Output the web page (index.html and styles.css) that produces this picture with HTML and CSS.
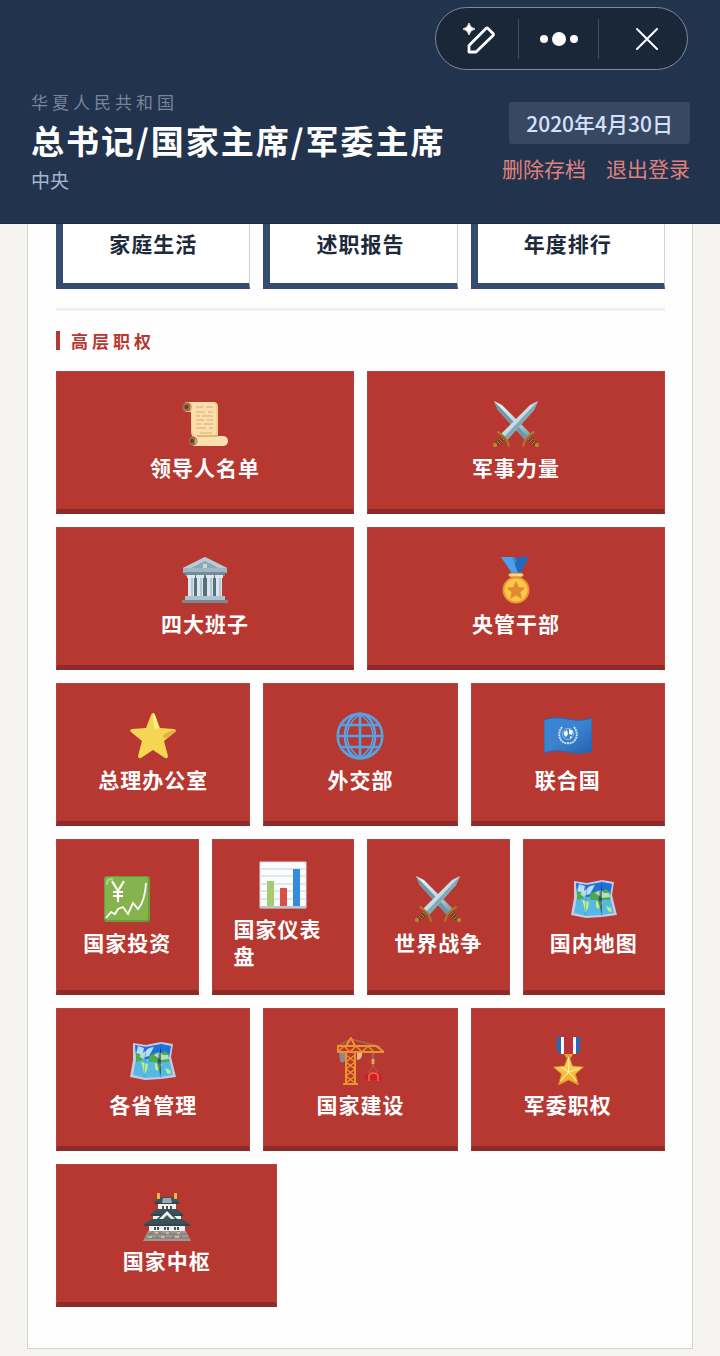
FILE: index.html
```html
<!DOCTYPE html>
<html lang="zh-CN">
<head>
<meta charset="utf-8">
<meta name="viewport" content="width=device-width, initial-scale=1">
<title>华夏人民共和国</title>
<link rel="stylesheet" href="styles.css">
</head>
<body>
<svg class="sprite" aria-hidden="true">
  <defs>
    <linearGradient id="blade" x1="0" y1="0" x2="1" y2="1"><stop offset="0" stop-color="#eef8fb"/><stop offset=".5" stop-color="#c3dbe5"/><stop offset="1" stop-color="#7296a5"/></linearGradient>
    <linearGradient id="gold" x1="0" y1="0" x2="0" y2="1"><stop offset="0" stop-color="#fee07a"/><stop offset="1" stop-color="#f0a51f"/></linearGradient>
    <linearGradient id="flag" x1="0" y1="0" x2="1" y2="1"><stop offset="0" stop-color="#3a86d4"/><stop offset=".5" stop-color="#3b83cf"/><stop offset="1" stop-color="#2461ac"/></linearGradient>
  </defs>
  <symbol id="scroll" viewBox="0 0 48 48">
    <path d="M6 2H34q3 1 3 5V38H13q-3-2-3-7V12H5q-4-2-3-6 1-4 4-4z" fill="#f6cf94"/>
    <path d="M10 7q-1-4-4-5H31q4 1 4 6v28H15q-4-2-4-7z" fill="#fbdeac"/>
    <circle cx="6" cy="7" r="4.500" fill="#9c6a48"/><circle cx="5.500" cy="7" r="2" fill="#5f402f"/>
    <path d="M9 3q4 3 0 9" fill="#d7a56e"/>
    <path d="M12 36H43q4 1 4 5t-4 5H12z" fill="#fbdfaf"/>
    <path d="M16 36H37" stroke="#dca96d" stroke-width="1.500"/>
    <circle cx="12" cy="41" r="4.500" fill="#9c6a48"/><circle cx="11" cy="41" r="2" fill="#5f402f"/>
    <path d="M14 37q4 4 0 8" fill="#d7a56e"/>
    <path d="M15 7h7m3 0h7M15 12h9m3 0h5M15 16h4m2 0h11M15 20h8m3 0h6M15 24h5m3 0h9M15 28h10m3 0h4M19 33h12" stroke="#d3a974" stroke-width="1.200" fill="none"/>
  </symbol>
  <symbol id="swords" viewBox="0 0 48 48">
    <path d="M2 1l8 4 29 29-6 6L6 10z" fill="url(#blade)"/>
    <path d="M2 1l4 9 27 30 3-3z" fill="#6e96a8"/>
    <path d="M37 35l8 8-3 3-8-8z" fill="#6d4323"/>
    <path d="M36 40l3-3m-1 5l3-3m-1 5l3-3" stroke="#b98142"/>
    <path d="M42 32q-2 1-4 3l-4 4q-2 3-3 7" fill="none" stroke="#a87a2c" stroke-width="2" stroke-linecap="round"/>
    <circle cx="45" cy="45" r="2.200" fill="#b98430"/>
    <path d="M46 1l-8 4L9 34l6 6 27-30z" fill="url(#blade)"/>
    <path d="M46 1L12 37l3 3 27-30z" fill="#81a9b9"/>
    <path d="M11 35l-8 8 3 3 8-8z" fill="#6d4323"/>
    <path d="M12 40l-3-3m1 5l-3-3m1 5l-3-3" stroke="#b98142"/>
    <path d="M6 32q2 1 4 3l4 4q2 3 3 7" fill="none" stroke="#a87a2c" stroke-width="2" stroke-linecap="round"/>
    <circle cx="3" cy="45" r="2.200" fill="#b98430"/>
  </symbol>
  <symbol id="temple" viewBox="0 0 48 48">
    <path d="M24 1L46 12v5H2v-5z" fill="#9eb5c3"/>
    <path d="M24 1L46 12H2z" fill="#b8ccd7"/><path d="M24 5L38 12H10z" fill="#8fa8b6"/><path d="M22 8h4v4h-4z" fill="#c7d6df"/>
    <path d="M4 16h40v4H4z" fill="#718b99"/>
    <path d="M7 20h34v22H7z" fill="#57707d"/>
    <path d="M6 19h8v3H6zm9 0h8v3h-8zm10 0h8v3h-8zm9 0h8v3h-8zM7 22h6v19H7zm9 0h6v19h-6zm10 0h6v19h-6zm9 0h6v19h-6z" fill="#dce7ed"/>
    <path d="M11 22v18m9-18v18m10-18v18m9-18v18" stroke="#a9bdc8" stroke-width="1.500"/>
    <path d="M4 40h40v4H4z" fill="#afc1cb"/><path d="M1 44h46v3H1z" fill="#758995"/>
  </symbol>
  <symbol id="medal" viewBox="0 0 48 48">
    <path d="M9 1h14l6 16h-9z" fill="#318bdd"/><path d="M37 1H26l-6 14 8 3z" fill="#2368bc"/><path d="M9 1h11l6 16h-6z" fill="#4aa2ee"/>
    <path d="M18 17h12q3 2 0 4H18q-3-2 0-4z" fill="#ffd98b" stroke="#b77b36"/>
    <circle cx="24" cy="34" r="13.500" fill="#e9962e"/><circle cx="24" cy="34" r="11.500" fill="#fbc64b"/>
    <path d="M24 25l2.800 6 6.700.8-5 4.500 1.400 6.700-5.900-3.400-5.900 3.400 1.400-6.700-5-4.500 6.700-.8z" fill="#e68a31"/>
  </symbol>
  <symbol id="star" viewBox="0 0 48 48">
    <path d="M24 1q1 0 2 2l5 13 14 1q3 1 1 3L35 29l4 15q0 3-3 2l-12-8-12 8q-3 1-3-2l4-15L2 20q-2-2 1-3l14-1 5-13q1-2 2-2z" fill="#f5d653"/>
    <path d="M24 1q1 0 2 2l4 13q-3 2-5-1z" fill="#fff18d"/>
    <path d="M46 18q2 1 0 2l-8 6q-5 0-4-2 4-5 12-6z" fill="#e3b13f"/>
  </symbol>
  <symbol id="globe" viewBox="0 0 48 48">
    <g fill="none" stroke="#55a3e3" stroke-width="2.600"><circle cx="24" cy="24" r="22.300"/><ellipse cx="24" cy="24" rx="15" ry="22.300"/><path d="M24 2v44M2 24h44M6 13h36M6 35h36"/></g>
    <path d="M24 2Q11 12 11 24t13 22Q37 36 37 24T24 2z" fill="none" stroke="#55a3e3" stroke-width="1.500"/>
  </symbol>
  <symbol id="un" viewBox="0 0 48 48">
    <path d="M0 8q11-4 24-1t24-1v33q-11 4-24 1T0 41z" fill="url(#flag)" stroke="#2867ae"/>
    <g fill="none" stroke="#cfe4f6"><path d="M18 15q-5 7-1 13 3 4 7 3M30 15q5 7 1 13-3 4-7 3" stroke-width="1.900" stroke-dasharray="2 .6"/><circle cx="24" cy="22" r="5.500" stroke-width=".6"/></g>
    <path d="M20 20l3-2 1 4-2 3-2-2zm5-3l4 2-1 4-3-1zm1 7l2 1-2 2z" fill="#fff"/>
  </symbol>
  <symbol id="yen" viewBox="0 0 48 48">
    <rect x="1" y="1" width="46" height="46" rx="3" fill="#689f39"/><rect x="2" y="2" width="43" height="43" rx="2" fill="#86b34e"/>
    <path d="M4 9q0-5 5-5" stroke="#b6d48e" stroke-width="2" fill="none" stroke-linecap="round"/>
    <g fill="none" stroke="#fff"><path d="M9 6l6 10 6-10M15 16v11M10 17h10M10 21h10" stroke-width="2.200"/><path d="M3 43l5-6 4 2 3-5 5-2 5 7 5-11 5 6q7-8 8-26" stroke-width="1.800"/></g>
  </symbol>
  <symbol id="chart" viewBox="0 0 48 48">
    <path d="M1 1h46v46H1z" fill="#fafcfd" stroke="#d7dfe3"/><path d="M2 8h44M2 15h44M2 23h44M2 30h44M2 38h44" stroke="#c6d2d9"/>
    <path d="M8 20h7v26H8z" fill="#a3cb6f"/><path d="M21 27h7v19h-7z" fill="#dd4e45"/><path d="M34 8h7v38h-7z" fill="#358be0"/><path d="M1 46h46" stroke="#b8c6ce" stroke-width="2"/>
  </symbol>
  <symbol id="map" viewBox="0 0 48 48">
    <path d="M4 6l13 2 15-3 12 2-2 13 5 20-15 2-16 1-15-3 3-17z" fill="#c6cbe3"/>
    <path d="M6 8l11 2 15-3 10 2-2 12 4 17-12 2-16 1-12-3 3-16z" fill="#55b9e4"/>
    <path d="M6 8l11 2 15-3 10 2-2 11-23 2-10-4z" fill="#1f70dd"/>
    <path d="M9 9l6 2-1 5 6-5 5-1-5 9-7 2-6-4z" fill="#b9ddf5"/>
    <path d="M7 16l4 1 3 6-7 2zm13 3l8-4 3 2 5-3 4 3v8H20z" fill="#4dab4d"/>
    <path d="M10 19q4-3 7 0l-3 3zm15-1l6-3 3 3h5l1 4-8 1z" fill="#b9dcc7"/>
    <path d="M12 25l7 2-1 6-3 5-1-7zm14 1l7 1-4 7-3-2zm10 5l5 2 1 4-4-1z" fill="#bef083"/>
    <path d="M17 9l-2 31M32 6l-4 20 4 15" stroke="#337fb4" opacity=".45"/>
  </symbol>
  <symbol id="crane" viewBox="0 0 48 48">
    <path d="M2 9L15 2l30 8" fill="none" stroke="#a56b5f" stroke-width="1.500"/>
    <path d="M3 15h6v9q-3 3-5 0z" fill="#8c8a90"/><path d="M21 15h5q1 7-5 8z" fill="#e8bc89"/>
    <g fill="none" stroke="#eb932e" stroke-width="2"><path d="M2 9h38l8 6H2zM10 16v30m9-30v30M7 47h15"/><path d="M2 15l6-6 6 6 6-6 6 6 6-6 6 6M10 18l9 7-9 7 9 7-9 7m9-28l-9 7 9 7-9 7 9 7" stroke-width="1.500"/><path d="M10 9l5-8 4 8"/></g>
    <path d="M37 16v14" stroke="#837078" stroke-width="2"/><path d="M37 22v5" stroke="#e7a53e" stroke-width="3"/>
    <path d="M31 38l6-9 6 9" fill="none" stroke="#d84d44"/><path d="M32 36h10l4 2v5H29v-5z" fill="#cc1f2a"/><path d="M33 44v-6q4-4 9 0v6" fill="none" stroke="#f16847" stroke-width="1.500"/>
  </symbol>
  <symbol id="honor" viewBox="0 0 48 48">
    <path d="M13 0h23v12q-1 5-4 5H17q-4-1-4-5z" fill="#2868ba"/><path d="M17 0h15v17H17z" fill="#f8f8f8"/><path d="M20 0h9v17h-9z" fill="#b8333a"/>
    <path d="M20 17h9l-3 5h-3z" fill="#e8a834"/>
    <path d="M24.500 18l4 11 11 1-8 7 3 11-10-5-10 5 3-11-8-7 11-1z" fill="url(#gold)" stroke="#d38927" stroke-width=".8"/>
    <path d="M24.500 20v15l-7-5 7 5-8 9 8-9 8 9-8-9 12-4" fill="none" stroke="#fff0a1" stroke-width="1"/>
  </symbol>
  <symbol id="castle" viewBox="0 0 48 48">
    <path d="M5 38h38l5 10H0z" fill="#a09993"/>
    <path d="M4 41h40M2 45h44M10 38l-2 3m9-3v3m9-3v3m9-3v3M7 42l-2 3m9-3v3m8-3v3m8-3v3m8-3l1 3" stroke="#77716c"/>
    <path d="M12 40h3m8 0h3m8 0h3M5 44h4m9 0h4m10 0h4" stroke="#d0c8be" stroke-width="1.500"/>
    <path d="M6 32h36v6H6zM10 22h28v6H10zM15 11h18v6H15z" fill="#f0f2ee"/>
    <path d="M16 4h16l5 6-2 1H13l-2-1zM14 16h20l7 6-2 1H9l-2-1zM9 26h30l9 6-2 1H2l-2-1z" fill="#3c525b"/>
    <path d="M12 10h24M8 22h32M2 32h44" stroke="#263b43"/>
    <path d="M20 5h8l1 5H19z" fill="#9babb0"/>
    <path d="M24 16L13 27h22z" fill="#314851"/><path d="M24 18l-8 8h16z" fill="#edf0ed"/><path d="M24 22l-5 5h10z" fill="#42565e"/>
    <path d="M14 0h3v6h-3zm17 0h3v6h-3z" fill="#edb641"/>
    <path d="M20 13v3m4-3v3m4-3v3M12 34v3m3-3v3m7-3v3m3-3v3m7-3v3m3-3v3" stroke="#39434a" stroke-width="1.800"/>
  </symbol>
</svg>

<header class="header">
  <div class="identity">
    <p class="country">华夏人民共和国</p>
    <h1 class="post">总书记/国家主席/军委主席</h1>
    <p class="place">中央</p>
  </div>
  <div class="session">
    <time class="date" datetime="2020-04-30">2020年4月30日</time>
    <nav class="links"><a href="#delete">删除存档</a><a href="#logout">退出登录</a></nav>
  </div>
</header>

<div class="capsule">
  <button type="button" aria-label="编辑"><svg width="34" height="32" viewBox="0 0 34 32" fill="none" stroke="#fff" stroke-width="2.800" stroke-linejoin="round"><path d="M7 22.500L24 5.500q1-1 2 0l5 5q1 1 0 2L14 29H7z"/><path d="M7 0q1 5 6 6-5 1-6 6-1-5-6-6 5-1 6-6z" fill="#fff" stroke="#fff" stroke-width=".8"/></svg></button>
  <button type="button" aria-label="更多"><svg width="40" height="16" viewBox="0 0 40 16" fill="#fff"><circle cx="5" cy="8" r="4"/><circle cx="20" cy="8" r="7"/><circle cx="35" cy="8" r="4"/></svg></button>
  <button type="button" aria-label="关闭" class="close"><svg width="22" height="22" viewBox="0 0 22 22" fill="none" stroke="#fff" stroke-width="2" stroke-linecap="round"><path d="M1 1l20 20M21 1L1 21"/></svg></button>
</div>

<main class="panel">
  <div class="row three">
    <button type="button" class="tile plain"><span>家庭生活</span></button>
    <button type="button" class="tile plain"><span>述职报告</span></button>
    <button type="button" class="tile plain"><span>年度排行</span></button>
  </div>
  <section class="powers">
    <h2 class="heading">高层职权</h2>
    <div class="rows">
      <div class="row two">
        <button type="button" class="tile"><svg class="icon"><use href="#scroll"/></svg><span>领导人名单</span></button>
        <button type="button" class="tile"><svg class="icon"><use href="#swords"/></svg><span>军事力量</span></button>
        <button type="button" class="tile"><svg class="icon"><use href="#temple"/></svg><span>四大班子</span></button>
        <button type="button" class="tile"><svg class="icon"><use href="#medal"/></svg><span>央管干部</span></button>
      </div>
      <div class="row three">
        <button type="button" class="tile"><svg class="icon"><use href="#star"/></svg><span>总理办公室</span></button>
        <button type="button" class="tile"><svg class="icon"><use href="#globe"/></svg><span>外交部</span></button>
        <button type="button" class="tile"><svg class="icon"><use href="#un"/></svg><span>联合国</span></button>
      </div>
      <div class="row four">
        <button type="button" class="tile"><svg class="icon"><use href="#yen"/></svg><span>国家投资</span></button>
        <button type="button" class="tile"><svg class="icon"><use href="#chart"/></svg><span>国家仪表盘</span></button>
        <button type="button" class="tile"><svg class="icon"><use href="#swords"/></svg><span>世界战争</span></button>
        <button type="button" class="tile"><svg class="icon"><use href="#map"/></svg><span>国内地图</span></button>
      </div>
      <div class="row three">
        <button type="button" class="tile"><svg class="icon"><use href="#map"/></svg><span>各省管理</span></button>
        <button type="button" class="tile"><svg class="icon"><use href="#crane"/></svg><span>国家建设</span></button>
        <button type="button" class="tile"><svg class="icon"><use href="#honor"/></svg><span>军委职权</span></button>
      </div>
      <div class="row single">
        <button type="button" class="tile"><svg class="icon"><use href="#castle"/></svg><span>国家中枢</span></button>
      </div>
    </div>
  </section>
</main>
</body>
</html>
```
FILE: styles.css
```css
* { box-sizing: border-box; }

body {
  margin: 0;
  background: #f4f3f0;
  font-family: "Noto Sans CJK SC", sans-serif;
  color: #1d2a3a;
}

h1, h2, p { margin: 0; }
button { font: inherit; color: inherit; cursor: pointer; }
.sprite { position: absolute; width: 0; height: 0; }

.header {
  position: fixed;
  z-index: 1;
  top: 0;
  left: 0;
  right: 0;
  display: flex;
  align-items: center;
  justify-content: space-between;
  padding: 92px 30px 31px 31px;
  background: #22334d;
  border-bottom: 1px solid #1c2c45;
}

.identity { display: flex; flex-direction: column; gap: 8px; }
.country { font-size: 17px; line-height: 20px; letter-spacing: 4px; color: #78849c; }
.post { font-size: 33px; line-height: 40px; letter-spacing: 2px; font-weight: 700; color: #fff; white-space: nowrap; }
.place { font-size: 19px; line-height: 24px; color: #a5b4d0; }

.session { display: flex; flex-direction: column; align-items: flex-end; gap: 10px; }
.date {
  padding: 0 17px;
  border-radius: 3px;
  background: #384862;
  color: #d3e2fa;
  font-size: 21px;
  line-height: 42px;
  font-weight: 500;
}
.links { display: flex; gap: 20px; }
.links a { color: #e0817d; font-size: 21px; line-height: 28px; text-decoration: none; white-space: nowrap; }

.capsule {
  position: fixed;
  z-index: 2;
  top: 7px;
  right: 32px;
  display: flex;
  align-items: center;
  height: 63px;
  border: 1px solid #7f8b9b;
  border-radius: 32px;
  background: #1a2739;
}
.capsule button {
  display: flex;
  align-items: center;
  justify-content: center;
  width: 80px;
  height: 40px;
  padding: 0;
  border: 0;
  border-right: 1px solid #414d5e;
  background: none;
}
.capsule button:first-child { width: 83px; padding-left: 4px; }
.capsule .close { width: 88px; padding-left: 8px; border-right: 0; }

.panel {
  margin: 117px 27px 7px;
  padding: 28px 27px 41px 28px;
  border: 1px solid #d3d3d5;
  background: #fefefe;
}

.row { display: grid; gap: 13px; }
.two { grid-template-columns: repeat(2, minmax(0, 1fr)); }
.three { grid-template-columns: repeat(3, minmax(0, 1fr)); }
.four { grid-template-columns: repeat(4, minmax(0, 1fr)); }
.single { grid-template-columns: minmax(0, 4fr) minmax(0, 7fr); gap: 0; }
.rows { display: grid; gap: 13px; }

.tile {
  display: flex;
  flex-direction: column;
  align-items: center;
  justify-content: center;
  gap: 6px;
  min-height: 143px;
  padding: 21px;
  border: 1px solid #b04440;
  border-bottom: 5px solid #8e2b29;
  background: #b73731;
  color: #fff;
  font-size: 21px;
  line-height: 27px;
  font-weight: 700;
  letter-spacing: 1px;
  text-align: left;
}
.plain {
  justify-content: flex-end;
  padding: 21px 21px 26px 15px;
  border: 1px solid #d0d2d5;
  border-left: 7px solid #344c6d;
  border-bottom: 6px solid #344c6d;
  background: #fff;
  color: #1d2a3a;
}
.icon { flex: none; width: 48px; height: 48px; }

.powers { margin-top: 19px; padding-top: 20px; border-top: 3px solid #f0f0f0; }
.heading {
  margin-bottom: 21px;
  padding-left: 11px;
  border-left: 4px solid #b73731;
  color: #b73731;
  font-size: 17px;
  line-height: 19px;
  letter-spacing: 4px;
  font-weight: 700;
}
```
